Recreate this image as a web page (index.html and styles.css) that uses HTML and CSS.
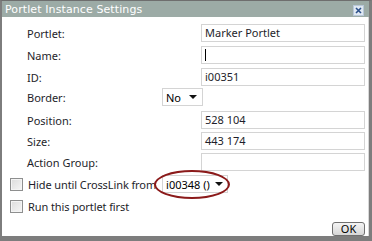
FILE: index.html
```html
<!DOCTYPE html>
<html lang="en">
<head>
    <meta charset="UTF-8">
    <title>Portlet Instance Settings</title>
    <link rel="stylesheet" href="styles.css">
</head>
<body>

    <div class="dialog">
        <div class="titlebar">
            <span class="title">Portlet Instance Settings</span>
            <span class="close">
                <svg width="11" height="11" viewBox="0 0 11 11">
                    <rect x="0.5" y="0.5" width="10" height="10" fill="#dfe8f2" stroke="#b8c7d8"/>
                    <path d="M3 3 L8 8 M8 3 L3 8" stroke="#2a4f8a" stroke-width="1.6"/>
                </svg>
            </span>
        </div>

        <div class="content">
            <div class="fields">
                <label class="lbl">Portlet:</label>
                <div class="field"><span class="input">Marker Portlet</span></div>

                <label class="lbl">Name:</label>
                <div class="field"><span class="input"><span class="caret"></span></span></div>

                <label class="lbl">ID:</label>
                <div class="field"><span class="input">i00351</span></div>

                <label class="lbl">Border:</label>
                <div class="field field-left">
                    <span class="select select-small">No <span class="arrow"></span></span>
                </div>

                <label class="lbl">Position:</label>
                <div class="field"><span class="input">528 104</span></div>

                <label class="lbl">Size:</label>
                <div class="field"><span class="input">443 174</span></div>

                <label class="lbl">Action Group:</label>
                <div class="field"><span class="input"></span></div>
            </div>

            <div class="check-row check-row-first">
                <span class="checkbox"></span>
                <span class="check-text">Hide until CrossLink from</span>
                <span class="marked">
                    <span class="select select-link">i00348 () <span class="arrow"></span></span>
                    <span class="ring"></span>
                </span>
            </div>

            <div class="check-row">
                <span class="checkbox"></span>
                <span class="check-text">Run this portlet first</span>
            </div>

            <div class="buttons">
                <button class="ok">OK</button>
            </div>
        </div>
    </div>

</body>
</html>
```

FILE: styles.css
```css
body, html {
    margin: 0;
    padding: 0;
    background-color: #7d7d7d;
}

.dialog {
    width: 367px;
    height: 235px;
    border-top: 1px solid #6e6e6e;
    border-left: 2px solid #7d7d7d;
    border-right: 3px solid #7d7d7d;
    border-bottom: 5px solid #7d7d7d;
    background-color: #ffffff;
    font-family: "Noto Sans", "DejaVu Sans", sans-serif;
    font-size: 11px;
    color: #1e1e2a;
    display: flex;
    flex-direction: column;
}

.titlebar {
    height: 16px;
    background-color: #9caba6;
    display: flex;
    align-items: center;
    justify-content: space-between;
    padding: 0 5px 0 3px;
}

.title {
    color: #ffffff;
    font-family: "DejaVu Sans", sans-serif;
    font-size: 11px;
    letter-spacing: 0.1px;
}

.close {
    display: flex;
    margin-top: 2px;
}

.content {
    flex: 1;
    display: flex;
    flex-direction: column;
    border-right: 1px solid #d8d8d8;
}

/* Tabela de campos */
.fields {
    display: grid;
    grid-template-columns: 135px 203px;
    grid-template-rows: 22px 22px 20px 23px 21px 21px 19px;
    margin: 7px 0 0 25px;
}

.lbl {
    display: flex;
    align-items: center;
    height: 18px;
}

.field {
    display: flex;
    justify-content: flex-end;
    align-items: flex-start;
}

.field-left {
    justify-content: flex-start;
}

.input {
    width: 159px;
    height: 16px;
    border: 1px solid #d4d4d4;
    padding: 0 0 0 3px;
    display: flex;
    align-items: center;
    line-height: 16px;
}

.caret {
    width: 1px;
    height: 12px;
    background-color: #000;
}

.select {
    display: flex;
    align-items: center;
    justify-content: space-between;
    border: 1px solid #d4d4d4;
    background-color: #fff;
    box-sizing: border-box;
    padding: 0 5px 0 3px;
    color: #000;
}

.select-small {
    width: 41px;
    height: 18px;
}

.select-link {
    width: 66px;
    height: 18px;
    padding-right: 4px;
}

.arrow {
    width: 0;
    height: 0;
    border-left: 4px solid transparent;
    border-right: 4px solid transparent;
    border-top: 4px solid #111;
}

/* Caixas de seleção */
.check-row {
    display: flex;
    align-items: center;
    height: 22px;
    margin-left: 8px;
}

.check-row-first {
    margin-top: 1px;
}

.checkbox {
    width: 11px;
    height: 11px;
    border: 1px solid #8e8f8f;
    background: linear-gradient(135deg, #dcdcdc, #f6f6f6);
    box-shadow: inset 0 0 0 1px #f4f4f4;
    margin-right: 5px;
}

.check-text {
    letter-spacing: -0.1px;
}

.marked {
    position: relative;
    margin-left: 6px;
}

.ring {
    position: absolute;
    left: -8px;
    top: -5px;
    width: 72px;
    height: 25px;
    border: 2px solid #8b1a1a;
    border-radius: 50%;
}

.buttons {
    display: flex;
    justify-content: flex-end;
    margin-top: auto;
    padding: 0 3px 0 0;
}

.ok {
    width: 33px;
    height: 14px;
    padding: 0;
    border: 1px solid #707070;
    border-radius: 3px;
    background: linear-gradient(#f4f4f4, #d6d6d6);
    font-family: "Noto Sans", "DejaVu Sans", sans-serif;
    font-size: 11px;
    line-height: 12px;
    color: #000;
}
```
